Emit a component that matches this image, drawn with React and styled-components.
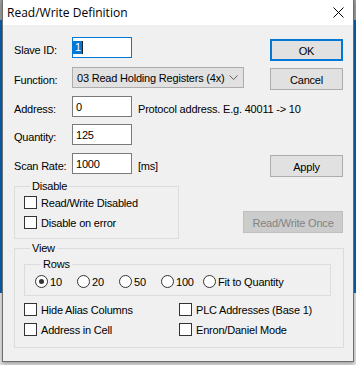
import React from "react";
import styled, { createGlobalStyle } from "styled-components";

const GlobalStyle = createGlobalStyle`
  html, body { margin: 0; padding: 0; }
  body {
    width: 356px;
    height: 365px;
    overflow: hidden;
    background: linear-gradient(to bottom, #9c9c9c 0, #9c9c9c 20px, #0b5fae 20px, #0b5fae 293px, #e4e4e4 293px);
    font-family: "Liberation Sans", Arial, sans-serif;
    font-size: 11px;
    letter-spacing: -0.2px;
    color: #000;
  }
`;

const Window = styled.div`
  margin-left: 2px;
  width: 352px;
  height: 362px;
  box-sizing: border-box;
  border: 1px solid #6e6e6e;
  border-top: none;
  background: #f0f0f0;
  display: flex;
  flex-direction: column;
  box-shadow: 0 2px 4px rgba(0, 0, 0, 0.3);
`;

const TitleBar = styled.div`
  height: 25px;
  flex: none;
  background: #fff;
  display: flex;
  align-items: center;
  justify-content: space-between;
  padding: 0 9px 0 4px;
`;

const Title = styled.span`
  font-family: "Open Sans", "Noto Sans", sans-serif;
  font-size: 12px;
  letter-spacing: 0;
  color: #000;
`;

const Body = styled.div`
  padding: 12px 8px 0 11px;
  display: flex;
  flex-direction: column;
`;

const Top = styled.div`
  display: grid;
  grid-template-columns: minmax(0, 1fr) auto;
`;

const LeftCol = styled.div`
  display: flex;
  flex-direction: column;
  min-width: 0;
`;

const RightCol = styled.div`
  display: flex;
  flex-direction: column;
  align-items: flex-end;
  margin-right: 2px;
`;

const FieldRow = styled.div`
  display: flex;
  align-items: center;
  height: 21px;
  margin-top: ${(p) => p.$mt || 0}px;
`;

const FieldLabel = styled.span`
  width: 58px;
  flex: none;
  padding-top: 4px;
`;

const EditBox = styled.div`
  width: 60px;
  height: 21px;
  flex: none;
  box-sizing: border-box;
  border: 1px solid ${(p) => (p.$focused ? "#0078d7" : "#7a7a7a")};
  background: #fff;
  padding-left: 3px;
  display: flex;
  align-items: center;
`;

const Selection = styled.span`
  margin-left: -3px;
  padding: 0 1px 0 2px;
  height: 13px;
  line-height: 13px;
  background: #0078d7;
  color: #fff;
`;

const Caret = styled.span`
  width: 1px;
  height: 13px;
  background: #222;
`;

const Combo = styled.div`
  width: 172px;
  height: 21px;
  flex: none;
  box-sizing: border-box;
  border: 1px solid #adadad;
  background: #e1e1e1;
  padding: 0 5px 0 4px;
  display: flex;
  align-items: center;
  justify-content: space-between;
`;

const Hint = styled.span`
  margin-left: 6px;
  padding-top: 4px;
  white-space: nowrap;
`;

const Button = styled.div`
  width: ${(p) => p.$w || 73}px;
  height: 22px;
  box-sizing: border-box;
  margin-top: ${(p) => p.$mt || 0}px;
  border: ${(p) => (p.$default ? "2px solid #0078d7" : p.$disabled ? "1px solid #bfbfbf" : "1px solid #adadad")};
  background: ${(p) => (p.$disabled ? "#cccccc" : "#e1e1e1")};
  color: ${(p) => (p.$disabled ? "#838383" : "#000")};
  display: flex;
  align-items: center;
  justify-content: center;
  padding-top: 1px;
  white-space: nowrap;
`;

const Group = styled.fieldset`
  margin: ${(p) => p.$mt || 0}px 0 0 0;
  width: ${(p) => p.$w}px;
  box-sizing: border-box;
  border: 1px solid #dcdcdc;
  padding: ${(p) => p.$pad};
  min-width: 0;
`;

const Legend = styled.legend`
  margin-left: 6px;
  padding: 0 2px;
  line-height: 13px;
  height: 13px;
`;

const CheckList = styled.div`
  display: grid;
  grid-template-columns: ${(p) => p.$cols || "1fr"};
  row-gap: 7px;
  margin-top: ${(p) => p.$mt || 0}px;
`;

const CheckItem = styled.label`
  display: flex;
  align-items: center;
  height: 13px;
  gap: 4px;
  white-space: nowrap;
`;

const Box = styled.span`
  width: 13px;
  height: 13px;
  box-sizing: border-box;
  border: 1px solid #333;
  background: #fff;
  flex: none;
`;

const RadioRow = styled.div`
  display: flex;
  align-items: center;
`;

const RadioItem = styled.label`
  display: flex;
  align-items: center;
  gap: 2px;
  height: 13px;
  width: ${(p) => (p.$w ? `${p.$w}px` : "auto")};
  white-space: nowrap;
`;

const RadioCircle = styled.span`
  width: 13px;
  height: 13px;
  box-sizing: border-box;
  border: 1px solid #333;
  border-radius: 50%;
  background: #fff;
  flex: none;
  display: flex;
  align-items: center;
  justify-content: center;
  &::after {
    content: "";
    display: ${(p) => (p.$checked ? "block" : "none")};
    width: 5px;
    height: 5px;
    border-radius: 50%;
    background: #333;
  }
`;

const CloseIcon = () => (
  <svg width="11" height="11" viewBox="0 0 11 11">
    <path d="M0.5 0.5 L10.5 10.5 M10.5 0.5 L0.5 10.5" stroke="#000" strokeWidth="1" fill="none" />
  </svg>
);

const Chevron = () => (
  <svg width="9" height="6" viewBox="0 0 9 6">
    <polyline points="0.5,0.5 4.5,4.5 8.5,0.5" stroke="#606060" strokeWidth="1" fill="none" />
  </svg>
);

const Check = ({ children }) => (
  <CheckItem>
    <Box />
    <span>{children}</span>
  </CheckItem>
);

const Radio = ({ checked, w, children }) => (
  <RadioItem $w={w}>
    <RadioCircle $checked={checked} />
    <span>{children}</span>
  </RadioItem>
);

export default function App() {
  return (
    <>
      <GlobalStyle />
      <Window>
        <TitleBar>
          <Title>Read/Write Definition</Title>
          <CloseIcon />
        </TitleBar>
        <Body>
          <Top>
            <LeftCol>
              <FieldRow>
                <FieldLabel>Slave ID:</FieldLabel>
                <EditBox $focused>
                  <Selection>1</Selection>
                  <Caret />
                </EditBox>
              </FieldRow>
              <FieldRow $mt={9}>
                <FieldLabel>Function:</FieldLabel>
                <Combo>
                  <span>03 Read Holding Registers (4x)</span>
                  <Chevron />
                </Combo>
              </FieldRow>
              <FieldRow $mt={8}>
                <FieldLabel>Address:</FieldLabel>
                <EditBox>0</EditBox>
                <Hint>Protocol address. E.g. 40011 -&gt; 10</Hint>
              </FieldRow>
              <FieldRow $mt={7}>
                <FieldLabel>Quantity:</FieldLabel>
                <EditBox>125</EditBox>
              </FieldRow>
              <FieldRow $mt={8}>
                <FieldLabel>Scan Rate:</FieldLabel>
                <EditBox>1000</EditBox>
                <Hint>[ms]</Hint>
              </FieldRow>
              <Group $mt={6} $w={165} $pad="3px 0 9px 9px">
                <Legend>Disable</Legend>
                <CheckList>
                  <Check>Read/Write Disabled</Check>
                  <Check>Disable on error</Check>
                </CheckList>
              </Group>
            </LeftCol>
            <RightCol>
              <Button $default $mt={2}>OK</Button>
              <Button $mt={7}>Cancel</Button>
              <Button $mt={65}>Apply</Button>
              <Button $mt={34} $w={100} $disabled>Read/Write Once</Button>
            </RightCol>
          </Top>
          <Group $mt={3} $w={330} $pad="3px 0 11px 9px">
            <Legend>View</Legend>
            <Group $w={307} $pad="4px 0 7px 10px">
              <Legend>Rows</Legend>
              <RadioRow>
                <Radio checked w={42}>10</Radio>
                <Radio w={42}>20</Radio>
                <Radio w={42}>50</Radio>
                <Radio w={42}>100</Radio>
                <Radio>Fit to Quantity</Radio>
              </RadioRow>
            </Group>
            <CheckList $cols="155px 1fr" $mt={7}>
              <Check>Hide Alias Columns</Check>
              <Check>PLC Addresses (Base 1)</Check>
              <Check>Address in Cell</Check>
              <Check>Enron/Daniel Mode</Check>
            </CheckList>
          </Group>
        </Body>
      </Window>
    </>
  );
}
